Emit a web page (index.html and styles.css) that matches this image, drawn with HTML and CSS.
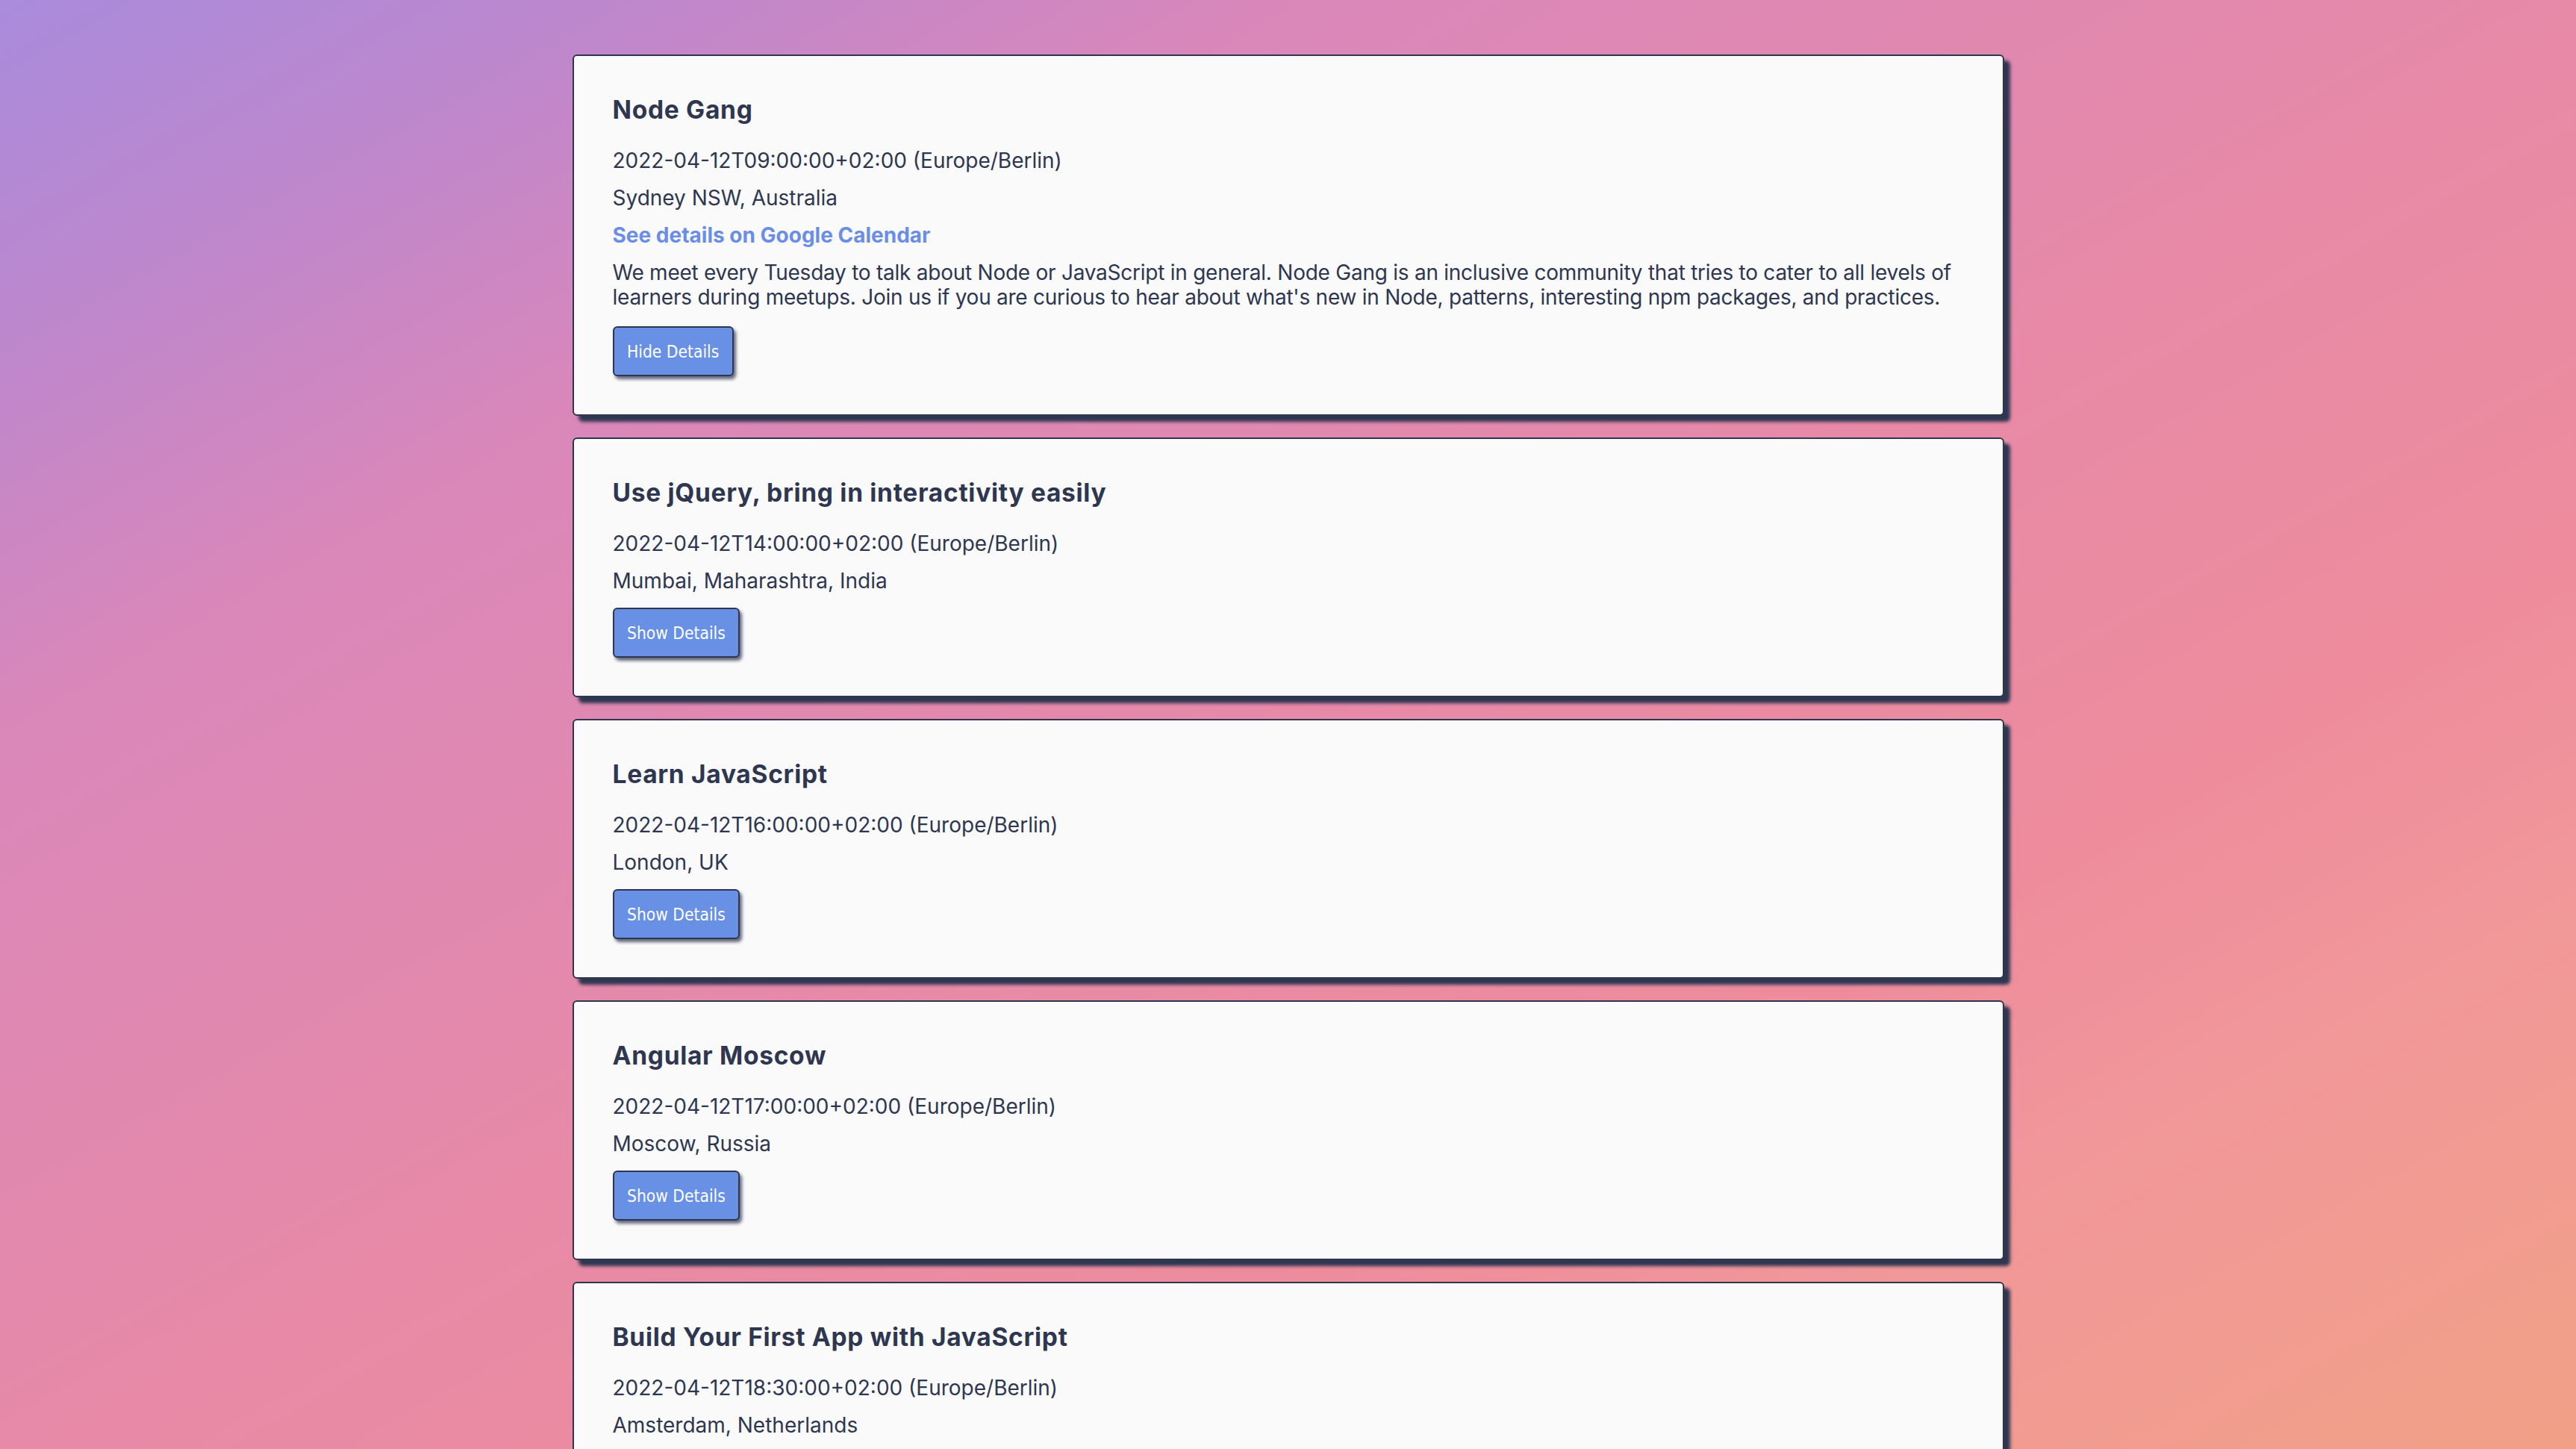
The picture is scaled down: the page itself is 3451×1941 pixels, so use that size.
FILE: index.html
```html
<!DOCTYPE html>
<html lang="en">
<head>
<meta charset="utf-8">
<title>Events</title>
<link rel="stylesheet" href="styles.css">
</head>
<body>
<main class="events">
  <article class="event">
    <h3 class="event-title">Node Gang</h3>
    <p class="event-line">2022-04-12T09:00:00+02:00 (Europe/Berlin)</p>
    <p class="event-line">Sydney NSW, Australia</p>
    <p class="event-line"><a class="event-link" href="#">See details on Google Calendar</a></p>
    <p class="event-line event-desc">We meet every Tuesday to talk about Node or JavaScript in general. Node Gang is an inclusive community that tries to cater to all levels of learners during meetups. Join us if you are curious to hear about what's new in Node, patterns, interesting npm packages, and practices.</p>
    <button class="event-toggle" type="button">Hide Details</button>
  </article>

  <article class="event">
    <h3 class="event-title">Use jQuery, bring in interactivity easily</h3>
    <p class="event-line">2022-04-12T14:00:00+02:00 (Europe/Berlin)</p>
    <p class="event-line">Mumbai, Maharashtra, India</p>
    <button class="event-toggle" type="button">Show Details</button>
  </article>

  <article class="event">
    <h3 class="event-title">Learn JavaScript</h3>
    <p class="event-line">2022-04-12T16:00:00+02:00 (Europe/Berlin)</p>
    <p class="event-line">London, UK</p>
    <button class="event-toggle" type="button">Show Details</button>
  </article>

  <article class="event">
    <h3 class="event-title">Angular Moscow</h3>
    <p class="event-line">2022-04-12T17:00:00+02:00 (Europe/Berlin)</p>
    <p class="event-line">Moscow, Russia</p>
    <button class="event-toggle" type="button">Show Details</button>
  </article>

  <article class="event">
    <h3 class="event-title">Build Your First App with JavaScript</h3>
    <p class="event-line">2022-04-12T18:30:00+02:00 (Europe/Berlin)</p>
    <p class="event-line">Amsterdam, Netherlands</p>
    <button class="event-toggle" type="button">Show Details</button>
  </article>
</main>
</body>
</html>
```
FILE: styles.css
```css
html {
  min-height: 100%;
  background: linear-gradient(to bottom right, #a98bdc 0%, #bb87ce 11%, #d987ba 25%, #e88aa7 52%, #ee8c9c 70%, #f1979a 80%, #f1a086 100%) fixed;
}

body {
  margin: 0;
  font-family: "Inter", "Noto Sans", sans-serif;
  font-size: 28px;
  line-height: 33px;
  color: #2e3650;
}

.events {
  display: flex;
  flex-direction: column;
  align-items: center;
  gap: 29px;
  padding: 73px 0 60px;
}

.event {
  box-sizing: border-box;
  width: 1918px;
  display: flex;
  flex-direction: column;
  align-items: flex-start;
  padding: 53px 54px 51px 52px;
  background: #fafafa;
  border: 2px solid #2e3650;
  border-radius: 6px;
  box-shadow: 8px 8px 4px #2e3650;
}

.event-title {
  margin: 0 0 32px;
  font-size: 33.5px;
  line-height: 39px;
  font-weight: 700;
  letter-spacing: 0.7px;
}

.event-line {
  margin: 0 0 17px;
  font-size: 28px;
  line-height: 33px;
}

.event-desc {
  margin-bottom: 20px;
  letter-spacing: -0.25px;
}

.event-link {
  color: #6a8ee6;
  font-weight: 700;
  text-decoration: none;
}

.event-toggle {
  margin-top: 2px;
  height: 67px;
  padding: 0 17.5px;
  font-family: "DejaVu Sans Condensed", "DejaVu Sans", sans-serif;
  font-size: 22.6px;
  color: #ffffff;
  background: #6890e5;
  border: 2px solid #2e3650;
  border-radius: 6px;
  box-shadow: 3px 4px 4px rgba(46, 54, 80, 0.75);
  cursor: pointer;
}
```
